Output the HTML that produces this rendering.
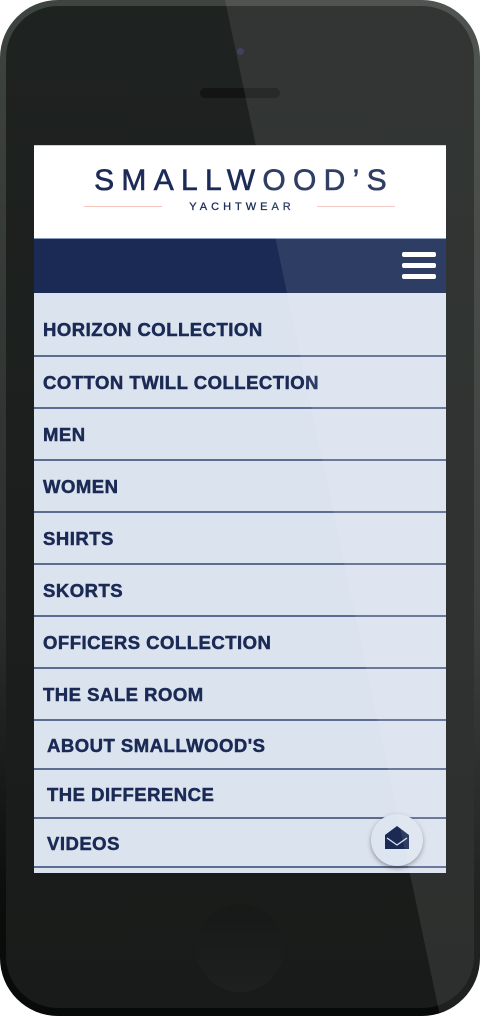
<!DOCTYPE html>
<html><head><meta charset="utf-8"><style>
*{margin:0;padding:0;box-sizing:border-box}
body{width:480px;height:1016px;background:#fff;position:relative;overflow:hidden;font-family:"Liberation Sans",sans-serif}
.phone{position:absolute;left:0;top:0;width:480px;height:1016px;border-radius:58px;background:linear-gradient(#3e4440 0%,#2a2e2c 60%,#0c0d0d 88%,#080909 100%);}
.inner{position:absolute;left:6px;top:6px;right:6px;bottom:8px;border-radius:52px;background:linear-gradient(#1e2220,#191b1a);}
.cam{position:absolute;left:237px;top:48px;width:7px;height:7px;border-radius:50%;background:#2c3050}
.spk{position:absolute;left:200px;top:88px;width:80px;height:10px;border-radius:5px;background:#131515}
.home{position:absolute;left:196px;top:904px;width:88px;height:88px;border-radius:50%;background:linear-gradient(#171918,#1e201f);}
.screen{position:absolute;left:34px;top:145px;width:412px;height:728px;background:#dbe3ef;overflow:hidden}
.hdr{height:93px;background:#fff;position:relative;border-top:1px solid #e8c8c0}
.logo{position:absolute;left:0;width:412px;text-align:center;top:18px;font-size:30px;color:#1c2b57;letter-spacing:7.3px;padding-left:8px;-webkit-text-stroke:.6px #1c2b57}
.sub{position:absolute;left:0;width:412px;text-align:center;top:55px;font-size:11px;color:#1c2b57;letter-spacing:4px;padding-left:4px;-webkit-text-stroke:.3px #1c2b57}
.pl{position:absolute;top:60px;height:1px;background:#f4c4bd;width:78px}
.nav{height:55px;background:#1a2a55;position:relative;border-top:1px solid #8a9bc0}
.bar{position:absolute;left:368px;width:34px;height:5px;border-radius:2px;background:#fff}
.it{height:52px;border-bottom:2px solid #5d6d91;color:#1a2a55;font-weight:bold;font-size:18.5px;letter-spacing:.5px;padding-left:9px;line-height:52px;-webkit-text-stroke:.5px #1a2a55}
.it.b{height:49px;line-height:49px;padding-left:13px}
.fab{position:absolute;left:337px;top:669px;width:52px;height:52px;border-radius:50%;background:#dde5f0;box-shadow:0 2px 5px rgba(0,0,0,.35)}
.refl{position:absolute;left:0;top:0;width:480px;height:1016px;background:rgba(255,255,255,.09);clip-path:polygon(225px 0,480px 0,480px 1016px,440px 1016px);pointer-events:none}
</style></head><body>
<div class="phone"></div><div class="inner"></div>
<div class="cam"></div><div class="spk"></div><div class="home"></div>
<div class="screen">
<div class="hdr"><div class="logo">SMALLWOOD’S</div><div class="pl" style="left:50px"></div><div class="pl" style="left:283px"></div><div class="sub">YACHTWEAR</div></div>
<div class="nav"><div class="bar" style="top:13px"></div><div class="bar" style="top:24px"></div><div class="bar" style="top:35px"></div></div>
<div class="it" style="height:64px;line-height:74px">HORIZON COLLECTION</div>
<div class="it">COTTON TWILL COLLECTION</div>
<div class="it">MEN</div>
<div class="it">WOMEN</div>
<div class="it">SHIRTS</div>
<div class="it">SKORTS</div>
<div class="it">OFFICERS COLLECTION</div>
<div class="it">THE SALE ROOM</div>
<div class="it b">ABOUT SMALLWOOD'S</div>
<div class="it b">THE DIFFERENCE</div>
<div class="it b">VIDEOS</div>
<div class="fab"><svg width="52" height="52" viewBox="0 0 52 52"><path d="M26 12 L38 21 V35 H14 V21 Z" fill="#1a2a55"/><path d="M16 24 L26 31 L36 24" stroke="#dde5f0" stroke-width="1.3" fill="none"/></svg></div>
</div>
<div class="refl"></div>
</body></html>
